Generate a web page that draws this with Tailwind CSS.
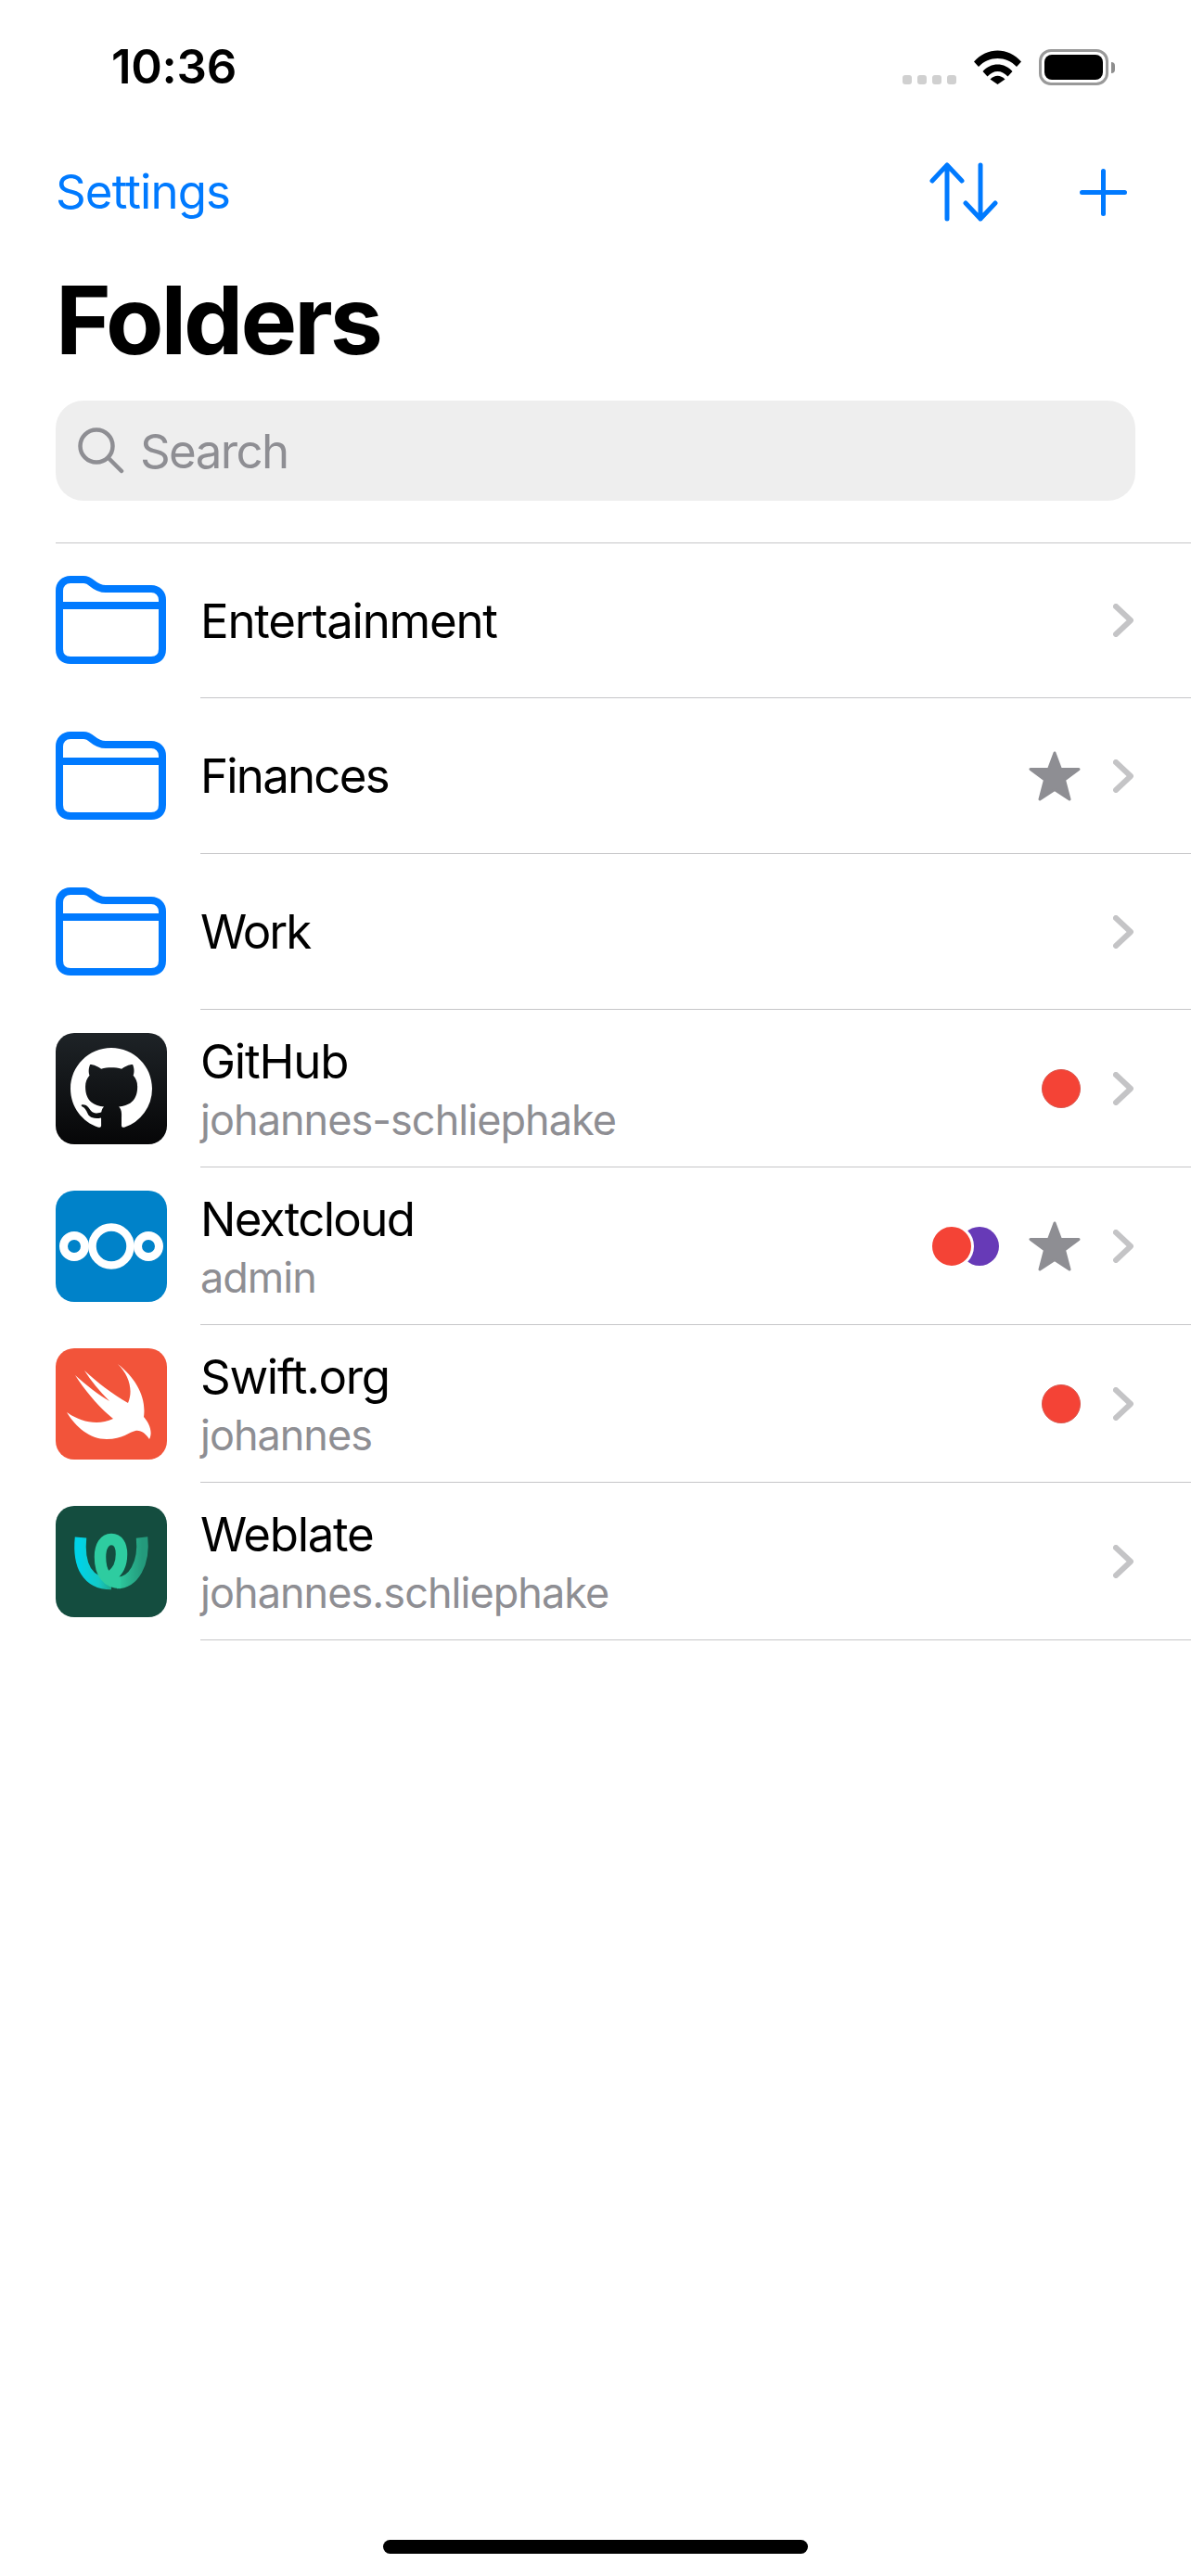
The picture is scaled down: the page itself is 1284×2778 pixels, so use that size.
<!DOCTYPE html>
<html lang="en">
  <head>
    <meta charset="UTF-8" />
    <meta name="viewport" content="width=device-width, initial-scale=1.0" />
    <script src="https://cdn.jsdelivr.net/npm/@tailwindcss/browser@4"></script>
    <title>Folders</title>
  </head>
  <body class="bg-white">
    <div class="w-[1284px] h-[2778px] flex flex-col font-['Inter',sans-serif] text-black overflow-hidden">
      <!-- status bar -->
      <div class="h-[144px] shrink-0 flex items-start pl-[120px] pr-[82px] pt-[45px]">
        <span class="text-[51px] leading-[54px] font-semibold tracking-[-0.300px]">10:36</span>
        <div class="ml-auto flex items-start pt-[8px]">
          <div class="flex gap-[6px] mt-[28px] mr-[19px]">
            <div class="w-[10px] h-[10px] rounded-[3px] bg-[#d0d0d0]"></div>
            <div class="w-[10px] h-[10px] rounded-[3px] bg-[#d0d0d0]"></div>
            <div class="w-[10px] h-[10px] rounded-[3px] bg-[#d0d0d0]"></div>
            <div class="w-[10px] h-[10px] rounded-[3px] bg-[#d0d0d0]"></div>
          </div>
          <svg class="w-[51px] h-[37px] mr-[19px] mt-[1px]" viewBox="0 0 51 37">
            <path d="M0 12.500 C14 -3.500 37 -3.500 51 12.500 L46 18 C35 6 16 6 5 18 Z M9.500 23 C18 13 33 13 41.500 23 L36.500 28.500 C30 21 21 21 14.500 28.500 Z" fill="#000" />
            <path d="M17.500 31.500 C22.500 26.500 28.500 26.500 33.500 31.500 L25.500 37 Z" fill="#000" />
          </svg>
          <div class="flex items-center">
            <div class="w-[75px] h-[39px] rounded-[13px] border-[3px] border-[#999999] p-[3px]">
              <div class="w-full h-full rounded-[8px] bg-black"></div>
            </div>
            <div class="w-[4px] h-[12px] ml-[3px] rounded-r-[4px] bg-[#8e8e8e]"></div>
          </div>
        </div>
      </div>

      <!-- nav bar -->
      <div class="h-[126px] shrink-0 flex items-center pl-[60px] pr-[69px]">
        <span class="text-[51px] text-[#007aff] tracking-[-0.900px]">Settings</span>
        <div class="ml-auto flex items-center gap-[88px]">
          <svg class="w-[74px] h-[64px]" viewBox="0 0 74 64" fill="none" stroke="#007aff" stroke-width="5" stroke-linecap="round" stroke-linejoin="round">
            <path d="M19 3 V61 M3 20 L19 3 L35 20" />
            <path d="M55 3 V61 M39 44 L55 61 L71 44" />
          </svg>
          <svg class="w-[51px] h-[51px]" viewBox="0 0 51 51" fill="none" stroke="#007aff" stroke-width="5" stroke-linecap="round">
            <path d="M25.500 2.500 V48.500 M2.500 25.500 H48.500" />
          </svg>
        </div>
      </div>

      <!-- title -->
      <h1 class="pl-[60px] h-[150px] mb-[12px] shrink-0 flex items-center text-[102px] font-bold tracking-[-3px]">Folders</h1>

      <!-- search -->
      <div class="mx-[60px] h-[108px] shrink-0 rounded-[30px] bg-[#eeeeee] flex items-center pl-[24px] gap-[17px]">
        <svg class="w-[50px] h-[50px]" viewBox="0 0 50 50" fill="none" stroke="#8e8e93" stroke-width="4.500" stroke-linecap="round">
          <circle cx="20" cy="20" r="17.500" />
          <path d="M33 33 L47 47" />
        </svg>
        <span class="text-[51px] text-[#8e8e93] tracking-[-1.600px] mt-[2px]">Search</span>
      </div>

      <!-- list -->
      <ul class="mt-[45px] border-t border-t-[#c6c6c8] ml-[60px]">
        <li class="flex items-center h-[167px]">
          <svg class="w-[119px] h-[95px] shrink-0 -mt-[2px]" viewBox="0 0 119 95" fill="none" stroke="#007aff" stroke-width="8"><path d="M16 4 H30 C40 4 40 14 54 14 H103 C110 14 115 19 115 26 V79 C115 87 110 91 103 91 H16 C9 91 4 87 4 79 V16 C4 9 9 4 16 4 Z M4 32 H115" /></svg>
          <div class="flex-1 ml-[37px] h-full border-b border-[#c6c6c8] flex items-center pr-[62px]">
            <span class="text-[51px] tracking-[-1.250px] mt-[2px]">Entertainment</span>
            <svg class="ml-auto w-[22px] h-[36px]" viewBox="0 0 22 36" fill="none" stroke="#c4c4c6" stroke-width="6" stroke-linecap="round" stroke-linejoin="round"><path d="M3 3 L19 18 L3 33" /></svg>
          </div>
        </li>
        <li class="flex items-center h-[168px]">
          <svg class="w-[119px] h-[95px] shrink-0 -mt-[1px]" viewBox="0 0 119 95" fill="none" stroke="#007aff" stroke-width="8"><path d="M16 4 H30 C40 4 40 14 54 14 H103 C110 14 115 19 115 26 V79 C115 87 110 91 103 91 H16 C9 91 4 87 4 79 V16 C4 9 9 4 16 4 Z M4 32 H115" /></svg>
          <div class="flex-1 ml-[37px] h-full border-b border-[#c6c6c8] flex items-center pr-[62px]">
            <span class="text-[51px] tracking-[-1.800px] mt-[2px]">Finances</span>
            <svg class="ml-auto w-[56px] h-[54px]" viewBox="0 0 56 54" fill="#8e8e93" stroke="#8e8e93" stroke-width="3" stroke-linejoin="round"><path d="M28 2 L34.500 19.500 L54 19.500 L38.500 31 L44 52 L28 41.500 L12 52 L17.500 31 L2 19.500 L21.500 19.500 Z" /></svg>
            <svg class="ml-[35px] w-[22px] h-[36px]" viewBox="0 0 22 36" fill="none" stroke="#c4c4c6" stroke-width="6" stroke-linecap="round" stroke-linejoin="round"><path d="M3 3 L19 18 L3 33" /></svg>
          </div>
        </li>
        <li class="flex items-center h-[168px]">
          <svg class="w-[119px] h-[95px] shrink-0 -mt-[1px]" viewBox="0 0 119 95" fill="none" stroke="#007aff" stroke-width="8"><path d="M16 4 H30 C40 4 40 14 54 14 H103 C110 14 115 19 115 26 V79 C115 87 110 91 103 91 H16 C9 91 4 87 4 79 V16 C4 9 9 4 16 4 Z M4 32 H115" /></svg>
          <div class="flex-1 ml-[37px] h-full border-b border-[#c6c6c8] flex items-center pr-[62px]">
            <span class="text-[51px] tracking-[-2px] mt-[2px]">Work</span>
            <svg class="ml-auto w-[22px] h-[36px]" viewBox="0 0 22 36" fill="none" stroke="#c4c4c6" stroke-width="6" stroke-linecap="round" stroke-linejoin="round"><path d="M3 3 L19 18 L3 33" /></svg>
          </div>
        </li>

        <li class="flex items-center h-[170px]">
          <svg class="w-[120px] h-[120px] shrink-0 rounded-[20px]" viewBox="0 0 120 120">
            <defs><linearGradient id="gh" x1="0" y1="0" x2="0" y2="1"><stop offset="0" stop-color="#1e2327" /><stop offset="1" stop-color="#060607" /></linearGradient></defs>
            <rect width="120" height="120" fill="url(#gh)" />
            <path transform="translate(16 16) scale(5.500)" fill="#fff" d="M8 0C3.58 0 0 3.58 0 8c0 3.54 2.29 6.530 5.470 7.590.4.070.55-.17.55-.38 0-.19-.01-.82-.01-1.490-2.010.37-2.530-.49-2.690-.94-.09-.23-.48-.94-.82-1.130-.28-.15-.68-.52-.01-.53.63-.01 1.080.58 1.230.82.72 1.210 1.870.87 2.330.66.07-.52.28-.87.51-1.070-1.780-.2-3.640-.89-3.640-3.950 0-.87.31-1.590.82-2.150-.08-.2-.36-1.020.08-2.120 0 0 .67-.21 2.200.82.64-.18 1.320-.27 2-.27.68 0 1.360.09 2 .27 1.530-1.040 2.200-.82 2.200-.82.44 1.100.16 1.920.08 2.120.51.56.82 1.270.82 2.150 0 3.070-1.870 3.750-3.650 3.950.29.25.54.73.54 1.480 0 1.070-.01 1.930-.01 2.200 0 .21.15.46.55.38A8.013 8.013 0 0016 8c0-4.420-3.580-8-8-8z" />
          </svg>
          <div class="flex-1 ml-[36px] h-full border-b border-[#c6c6c8] flex items-center pr-[62px]">
            <div class="flex flex-col mt-[1px]">
              <span class="text-[51px] leading-[62px] tracking-[-1.200px]">GitHub</span>
              <span class="text-[45px] leading-[54px] mt-[5px] text-[#8e8e93] tracking-[-0.950px]">johannes-schliephake</span>
            </div>
            <div class="ml-auto w-[42px] h-[42px] rounded-full bg-[#f44336] border-[1.500px] border-[#d9574e]"></div>
            <svg class="ml-[35px] w-[22px] h-[36px]" viewBox="0 0 22 36" fill="none" stroke="#c4c4c6" stroke-width="6" stroke-linecap="round" stroke-linejoin="round"><path d="M3 3 L19 18 L3 33" /></svg>
          </div>
        </li>
        <li class="flex items-center h-[170px]">
          <svg class="w-[120px] h-[120px] shrink-0 rounded-[20px]" viewBox="0 0 120 120">
            <rect width="120" height="120" fill="#0082c9" />
            <g fill="none" stroke="#fff"><circle cx="60" cy="60" r="20.500" stroke-width="8.500" /><circle cx="20" cy="60" r="11.500" stroke-width="9" /><circle cx="100" cy="60" r="11.500" stroke-width="9" /></g>
          </svg>
          <div class="flex-1 ml-[36px] h-full border-b border-[#c6c6c8] flex items-center pr-[62px]">
            <div class="flex flex-col mt-[1px]">
              <span class="text-[51px] leading-[62px] tracking-[-1.700px]">Nextcloud</span>
              <span class="text-[45px] leading-[54px] mt-[5px] text-[#8e8e93] tracking-[-1px]">admin</span>
            </div>
            <div class="ml-auto flex items-center">
              <div class="relative z-10 w-[48px] h-[48px] rounded-full bg-[#f44336] border-[3px] border-white"></div>
              <div class="-ml-[15px] w-[42px] h-[42px] rounded-full bg-[#673ab7]"></div>
            </div>
            <svg class="ml-[32px] w-[56px] h-[54px]" viewBox="0 0 56 54" fill="#8e8e93" stroke="#8e8e93" stroke-width="3" stroke-linejoin="round"><path d="M28 2 L34.500 19.500 L54 19.500 L38.500 31 L44 52 L28 41.500 L12 52 L17.500 31 L2 19.500 L21.500 19.500 Z" /></svg>
            <svg class="ml-[35px] w-[22px] h-[36px]" viewBox="0 0 22 36" fill="none" stroke="#c4c4c6" stroke-width="6" stroke-linecap="round" stroke-linejoin="round"><path d="M3 3 L19 18 L3 33" /></svg>
          </div>
        </li>
        <li class="flex items-center h-[170px]">
          <svg class="w-[120px] h-[120px] shrink-0 rounded-[20px]" viewBox="0 0 120 120">
            <rect width="120" height="120" fill="#f2543a" />
            <path fill="#fff" d="M67 17 C86 32 98 52 95 74 C101 81 105 90 101 98 C97 92 92 88 86 89 C80 90 72 98 55 98 C36 98 21 84 12 69 C26 79 45 84 62 76 C46 63 32 46 21 29 C33 40 46 50 58 57 C47 46 38 35 31 24 C45 37 61 49 78 59 C84 45 79 29 67 17 Z" />
          </svg>
          <div class="flex-1 ml-[36px] h-full border-b border-[#c6c6c8] flex items-center pr-[62px]">
            <div class="flex flex-col mt-[1px]">
              <span class="text-[51px] leading-[62px] tracking-[-1.300px]">Swift.org</span>
              <span class="text-[45px] leading-[54px] mt-[5px] text-[#8e8e93] tracking-[-1px]">johannes</span>
            </div>
            <div class="ml-auto w-[42px] h-[42px] rounded-full bg-[#f44336] border-[1.500px] border-[#d9574e]"></div>
            <svg class="ml-[35px] w-[22px] h-[36px]" viewBox="0 0 22 36" fill="none" stroke="#c4c4c6" stroke-width="6" stroke-linecap="round" stroke-linejoin="round"><path d="M3 3 L19 18 L3 33" /></svg>
          </div>
        </li>
        <li class="flex items-center h-[170px]">
          <svg class="w-[120px] h-[120px] shrink-0 rounded-[20px]" viewBox="0 0 120 120">
            <defs>
              <linearGradient id="wl" x1="0" y1="0" x2="1" y2="0"><stop offset="0" stop-color="#00d2e6" /><stop offset="0.6" stop-color="#14c9c4" /><stop offset="1" stop-color="#1fa98c" /></linearGradient>
              <linearGradient id="wr" x1="0" y1="0" x2="1" y2="0"><stop offset="0" stop-color="#2ecca0" /><stop offset="1" stop-color="#249a7c" /></linearGradient>
            </defs>
            <rect width="120" height="120" fill="#144d3f" />
            <g fill="none" stroke-width="12.500">
              <path stroke="url(#wl)" d="M27 34 C24 64 34 84 60 84" />
              <path stroke="url(#wr)" d="M93 34 C96 62 84 83 66 83" />
              <path stroke="#2ecca0" d="M60 76 C67 70 71 64 71 52 C71 42 67 36 60 36 C53 36 48 43 48 55 C48 73 56 83 70 83" />
            </g>
          </svg>
          <div class="flex-1 ml-[36px] h-full border-b border-[#c6c6c8] flex items-center pr-[62px]">
            <div class="flex flex-col mt-[1px]">
              <span class="text-[51px] leading-[62px] tracking-[-1.300px]">Weblate</span>
              <span class="text-[45px] leading-[54px] mt-[5px] text-[#8e8e93] tracking-[-0.950px]">johannes.schliephake</span>
            </div>
            <svg class="ml-auto w-[22px] h-[36px]" viewBox="0 0 22 36" fill="none" stroke="#c4c4c6" stroke-width="6" stroke-linecap="round" stroke-linejoin="round"><path d="M3 3 L19 18 L3 33" /></svg>
          </div>
        </li>
      </ul>

      <!-- home indicator -->
      <div class="mt-auto mb-[24px] mx-auto w-[458px] h-[15px] shrink-0 rounded-full bg-black"></div>
    </div>
  </body>
</html>
